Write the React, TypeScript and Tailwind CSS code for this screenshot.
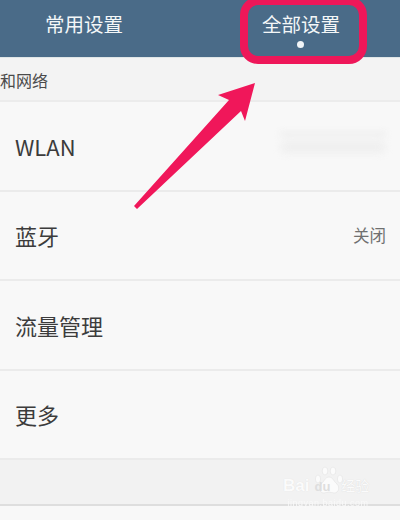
const rowText = "text-[22px] leading-none text-[#3c3c3c]";

function Row({ label, value }: { label: string; value?: React.ReactNode }) {
  return (
    <div className="flex h-[89.5px] items-center justify-between border-b-2 border-[#ebebeb] pl-[15px] pr-[14px]">
      <span className={rowText}>{label}</span>
      {value}
    </div>
  );
}

function Arrow() {
  return (
    <svg className="absolute left-0 top-0 blur-[0.5px]" width="400" height="230" viewBox="0 0 400 230">
      <polygon points="134,206 137,209 241,111 245,121 255,83 218,95 229,100" fill="#f0175a" />
    </svg>
  );
}

function Watermark() {
  return (
    <div className="absolute left-[283px] top-[465px] flex h-[48px] w-[90px] flex-col items-center text-[#fbfbfb]">
      <svg className="absolute left-[31px] top-0" width="30" height="36" viewBox="0 0 30 36" fill="#fbfbfb" stroke="#e2e2e2" strokeWidth="0.6">
        <ellipse cx="4" cy="14" rx="2.6" ry="4" />
        <ellipse cx="11" cy="6" rx="2.8" ry="4" />
        <ellipse cx="19" cy="6" rx="2.8" ry="4" />
        <ellipse cx="26" cy="14" rx="2.6" ry="4" />
        <path d="M15 12c-4 0-5 5-8 7-3 3-2 9 3 9 2 0 3-1 5-1s3 1 5 1c5 0 6-6 3-9-3-2-4-7-8-7z" />
      </svg>
      <div className="relative mt-[12px] flex w-full items-baseline font-['Liberation_Sans',sans-serif] text-[17px] font-bold leading-none">
        <span className="[text-shadow:0_0_1px_#dcdcdc]">Bai</span>
        <span className="ml-[5px] text-[13px] text-[#dedede]">du</span>
        <span className="ml-[11px] font-['Noto_Sans_CJK_SC',sans-serif] text-[14px] font-normal [text-shadow:0_0_1px_#d4d4d4]">经验</span>
      </div>
      <span className="relative mt-[5px] font-['Liberation_Sans',sans-serif] text-[9px] leading-none tracking-[0.5px] text-[#f9f9f9] blur-[0.5px]">jingyan.baidu.com</span>
    </div>
  );
}

export default function App() {
  return (
    <div className="relative h-[520px] w-[400px] overflow-hidden bg-[#f8f8f8] font-['Noto_Sans_CJK_SC','Liberation_Sans',sans-serif]">
      <div className="flex h-[58px] items-start border-b border-[#dfe5e6] bg-[#4a6b88] pt-[11px] text-[19.5px] leading-[26px] text-[#f4f7f8]">
        <div className="ml-[45px]">常用设置</div>
        <div className="relative ml-[139px]">
          全部设置
          <div className="absolute left-[35px] top-[30px] h-[7px] w-[7px] rounded-full bg-[#f2f5f7]" />
        </div>
      </div>

      <div className="flex h-[44px] items-center border-b-2 border-[#ececec] bg-[#f3f3f3] pt-[2px] text-[16px] leading-none text-[#4a4a4a]">
        和网络
      </div>

      <Row
        label="WLAN"
        value={
          <div className="flex h-[28px] w-[106px] flex-col gap-[4px] blur-[3px]">
            <div className="h-[4px] w-full bg-[#ececec]" />
            <div className="h-[14px] w-full rounded-full bg-[#f0f0f0]" />
          </div>
        }
      />
      <Row label="蓝牙" value={<span className="text-[16.5px] leading-none text-[#707070]">关闭</span>} />
      <Row label="流量管理" />
      <Row label="更多" />

      <div className="h-[46px] border-b-2 border-[#dedede] bg-[#f2f2f2]" />

      <div className="absolute left-[240px] top-[-3px] h-[67px] w-[127px] rounded-[18px] border-[8px] border-[#ee1759]" />
      <Arrow />
      <Watermark />
    </div>
  );
}
